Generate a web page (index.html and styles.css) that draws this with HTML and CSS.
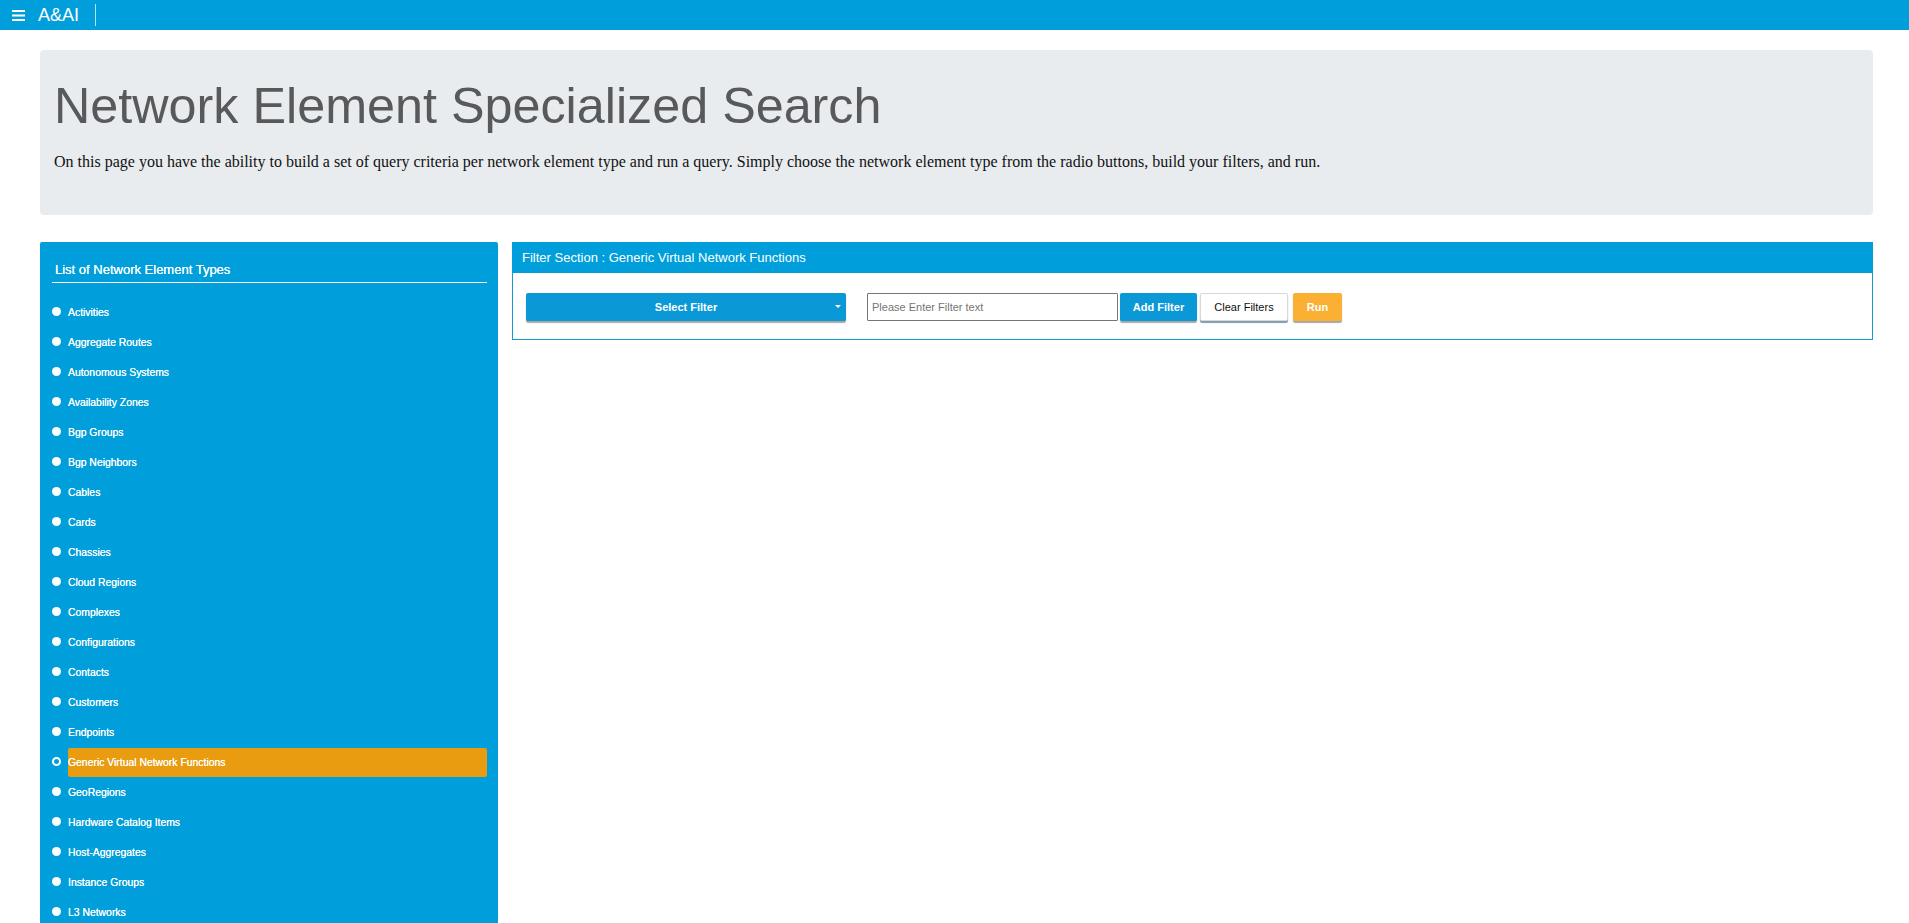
FILE: index.html
```html
<!DOCTYPE html>
<html lang="en">
<head>
<meta charset="utf-8">
<title>A&amp;AI - Network Element Specialized Search</title>
<link rel="stylesheet" href="styles.css">
</head>
<body>
<header class="topbar">
  <svg class="menu-icon" width="13" height="11" viewBox="0 0 13 11" aria-hidden="true">
    <rect x="0" y="0" width="13" height="2" fill="#fff"/>
    <rect x="0" y="4.5" width="13" height="2" fill="#fff"/>
    <rect x="0" y="9" width="13" height="2" fill="#fff"/>
  </svg>
  <span class="brand">A&amp;AI</span>
  <span class="divider"></span>
</header>

<main class="page">
  <section class="jumbotron">
    <h1 class="jumbo-title">Network Element Specialized Search</h1>
    <p class="jumbo-text">On this page you have the ability to build a set of query criteria per network element type and run a query. Simply choose the network element type from the radio buttons, build your filters, and run.</p>
  </section>

  <div class="content">
    <aside class="types-panel">
      <h2 class="types-title">List of Network Element Types</h2>
      <ul class="types-list">
        <li class="type-item"><span class="radio"></span><span class="type-label">Activities</span></li>
        <li class="type-item"><span class="radio"></span><span class="type-label">Aggregate Routes</span></li>
        <li class="type-item"><span class="radio"></span><span class="type-label">Autonomous Systems</span></li>
        <li class="type-item"><span class="radio"></span><span class="type-label">Availability Zones</span></li>
        <li class="type-item"><span class="radio"></span><span class="type-label">Bgp Groups</span></li>
        <li class="type-item"><span class="radio"></span><span class="type-label">Bgp Neighbors</span></li>
        <li class="type-item"><span class="radio"></span><span class="type-label">Cables</span></li>
        <li class="type-item"><span class="radio"></span><span class="type-label">Cards</span></li>
        <li class="type-item"><span class="radio"></span><span class="type-label">Chassies</span></li>
        <li class="type-item"><span class="radio"></span><span class="type-label">Cloud Regions</span></li>
        <li class="type-item"><span class="radio"></span><span class="type-label">Complexes</span></li>
        <li class="type-item"><span class="radio"></span><span class="type-label">Configurations</span></li>
        <li class="type-item"><span class="radio"></span><span class="type-label">Contacts</span></li>
        <li class="type-item"><span class="radio"></span><span class="type-label">Customers</span></li>
        <li class="type-item"><span class="radio"></span><span class="type-label">Endpoints</span></li>
        <li class="type-item selected"><span class="radio"></span><span class="type-label">Generic Virtual Network Functions</span></li>
        <li class="type-item"><span class="radio"></span><span class="type-label">GeoRegions</span></li>
        <li class="type-item"><span class="radio"></span><span class="type-label">Hardware Catalog Items</span></li>
        <li class="type-item"><span class="radio"></span><span class="type-label">Host-Aggregates</span></li>
        <li class="type-item"><span class="radio"></span><span class="type-label">Instance Groups</span></li>
        <li class="type-item"><span class="radio"></span><span class="type-label">L3 Networks</span></li>
        <li class="type-item"><span class="radio"></span><span class="type-label">Lag Interfaces</span></li>
      </ul>
    </aside>

    <section class="filter-panel">
      <div class="filter-header">Filter Section : Generic Virtual Network Functions</div>
      <div class="filter-body">
        <button class="btn btn-select" type="button">Select Filter<span class="caret"></span></button>
        <input class="filter-input" type="text" placeholder="Please Enter Filter text">
        <button class="btn btn-add" type="button">Add Filter</button>
        <button class="btn btn-clear" type="button">Clear Filters</button>
        <button class="btn btn-run" type="button">Run</button>
      </div>
    </section>
  </div>
</main>
</body>
</html>
```

FILE: styles.css
```css
html, body {
  margin: 0;
  padding: 0;
  background: #ffffff;
  font-family: "Liberation Sans", Arial, sans-serif;
}

.topbar {
  height: 30px;
  background: #009fdb;
  display: flex;
  align-items: center;
  padding-left: 12px;
  box-sizing: border-box;
  color: #fff;
}

.menu-icon {
  display: block;
  margin-top: 1px;
}

.brand {
  margin-left: 13px;
  font-size: 18px;
  line-height: 20px;
  color: #fff;
}

.divider {
  width: 1px;
  height: 22px;
  background: rgba(255, 255, 255, 0.7);
  margin-left: 16px;
}

.page {
  padding: 20px 36px 0 40px;
}

.jumbotron {
  background: #e9ecef;
  border-radius: 4px;
  padding: 26px 14px 41px 14px;
}

.jumbo-title {
  margin: 0 0 14px 0;
  font-family: "Liberation Sans", Arial, sans-serif;
  font-weight: normal;
  font-size: 50.3px;
  line-height: 60px;
  color: #58595b;
}

.jumbo-text {
  margin: 0;
  font-family: "Liberation Serif", "Times New Roman", serif;
  font-size: 16px;
  line-height: 24px;
  color: #111;
}

.content {
  display: flex;
  align-items: flex-start;
  gap: 14px;
  margin-top: 27px;
}

.types-panel {
  width: 458px;
  flex: none;
  background: #009fdb;
  border-radius: 2px 2px 0 0;
  padding: 18px 11px 20px 12px;
  box-sizing: border-box;
  color: #fff;
}

.types-title {
  margin: 0;
  padding: 0 0 2px 3px;
  font-size: 13px;
  line-height: 20px;
  font-weight: normal;
  color: #fff;
  text-shadow: 0 0 0.4px #fff;
  border-bottom: 1px solid #fff;
}

.types-list {
  list-style: none;
  margin: 14px 0 0 0;
  padding: 0;
}

.type-item {
  display: flex;
  align-items: center;
  height: 30px;
}

.radio {
  width: 9px;
  height: 9px;
  border-radius: 50%;
  background: #fff;
  flex: none;
  margin-right: 7px;
  margin-top: -2px;
  box-sizing: border-box;
}

.type-item.selected .radio {
  background: #009fdb;
  border: 2px solid #fff;
}

.type-label {
  flex: 1;
  height: 29px;
  display: flex;
  align-items: center;
  font-size: 10.4px;
  color: #fff;
  text-shadow: 0 0 0.3px #fff;
  border-radius: 2px;
}

.type-item.selected .type-label {
  background: #e99c10;
}

.filter-panel {
  flex: 1;
  border: 1px solid #1a9ad3;
  border-top: none;
}

.filter-header {
  height: 31px;
  background: #009fdb;
  color: #fff;
  font-size: 13px;
  display: flex;
  align-items: center;
  padding-left: 10px;
  margin: 0 -1px;
}

.filter-body {
  display: flex;
  align-items: center;
  padding: 20px 12px 18px 13px;
}

.btn {
  height: 28px;
  border: none;
  border-radius: 2px;
  font-family: "Liberation Sans", Arial, sans-serif;
  font-size: 11px;
  font-weight: bold;
  cursor: pointer;
  box-shadow: 0 2px 1px rgba(0, 0, 0, 0.35);
}

.btn-select {
  width: 320px;
  background: #0a99d6;
  color: #fff;
  position: relative;
}

.caret {
  position: absolute;
  right: 5px;
  top: 12px;
  width: 0;
  height: 0;
  border-left: 3px solid transparent;
  border-right: 3px solid transparent;
  border-top: 3px solid #fff;
}

.filter-input {
  margin-left: 21px;
  width: 251px;
  height: 28px;
  box-sizing: border-box;
  border: 1px solid #767676;
  border-radius: 1px;
  padding: 0 4px;
  font-family: "Liberation Sans", Arial, sans-serif;
  font-size: 11px;
  color: #333;
}

.filter-input::placeholder {
  color: #757575;
}

.btn-add {
  margin-left: 2px;
  width: 77px;
  background: #0a99d6;
  color: #fff;
}

.btn-clear {
  margin-left: 3px;
  width: 88px;
  background: #fff;
  color: #111;
  font-weight: normal;
  border: 1px solid #d8d8d8;
  box-shadow: 0 2px 1px rgba(40, 90, 130, 0.6);
}

.btn-run {
  margin-left: 5px;
  width: 49px;
  background: #fbb034;
  color: #fff;
}
```
